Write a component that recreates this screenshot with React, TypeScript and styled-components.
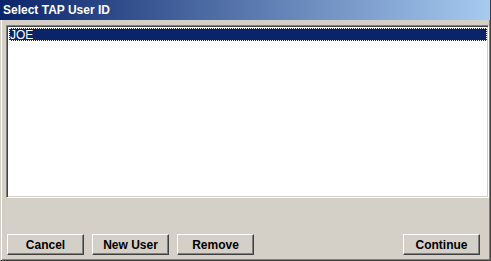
import React from 'react';
import styled, { createGlobalStyle } from 'styled-components';

const GlobalStyle = createGlobalStyle`
  html, body {
    margin: 0;
    padding: 0;
    background: #d4d0c8;
  }
  * {
    box-sizing: border-box;
  }
`;

const Window = styled.div`
  width: 491px;
  height: 261px;
  display: flex;
  flex-direction: column;
  background: #d4d0c8;
  border-left: 1px solid #d4d0c8;
  border-right: 1px solid #404040;
  border-bottom: 1px solid #404040;
  box-shadow: inset 1px 0 0 #ffffff, inset -1px 0 0 #808080, inset 0 -1px 0 #808080;
  font-family: "Liberation Sans", Arial, sans-serif;
`;

const TitleBar = styled.div`
  height: 20px;
  flex: none;
  display: flex;
  align-items: center;
  padding-left: 3px;
  margin-left: -1px;
  background: linear-gradient(to right, #0a246a, #a6caf0);
  color: #ffffff;
  font-size: 12px;
  font-weight: bold;
`;

const Body = styled.div`
  flex: 1;
  display: flex;
  flex-direction: column;
  padding: 5px 1px 5px 5px;
`;

const ListBox = styled.div`
  height: 173px;
  flex: none;
  background: #ffffff;
  border-top: 1px solid #808080;
  border-left: 1px solid #808080;
  border-right: 1px solid #ffffff;
  border-bottom: 1px solid #ffffff;
  box-shadow: inset 1px 1px 0 #404040, inset -1px -1px 0 #d4d0c8;
  padding: 2px 1px 2px 2px;
`;

const ListItem = styled.div<{ selected?: boolean }>`
  height: 13px;
  display: flex;
  align-items: center;
  padding-left: 1px;
  font-size: 12px;
  color: ${p => (p.selected ? '#ffffff' : '#000000')};
  background: ${p => (p.selected ? '#0a246a' : 'transparent')};
  outline: ${p => (p.selected ? '1px dotted #ffffff' : 'none')};
  outline-offset: -1px;
`;

const ButtonRow = styled.div`
  margin-top: auto;
  display: flex;
  gap: 8px;
  padding-left: 1px;
  padding-right: 9px;
`;

const Button = styled.button<{ push?: boolean }>`
  width: 77px;
  height: 21px;
  padding: 0;
  margin: 0;
  margin-left: ${p => (p.push ? 'auto' : '0')};
  background: #d4d0c8;
  border: none;
  border-top: 1px solid #ffffff;
  border-left: 1px solid #ffffff;
  border-right: 1px solid #404040;
  border-bottom: 1px solid #404040;
  box-shadow: inset -1px -1px 0 #808080;
  font-family: "Liberation Sans", Arial, sans-serif;
  font-size: 12px;
  font-weight: bold;
  color: #000000;
`;

export default function App() {
  return (
    <>
      <GlobalStyle />
      <Window>
        <TitleBar>Select TAP User ID</TitleBar>
        <Body>
          <ListBox>
            <ListItem selected>JOE</ListItem>
          </ListBox>
          <ButtonRow>
            <Button>Cancel</Button>
            <Button>New User</Button>
            <Button>Remove</Button>
            <Button push>Continue</Button>
          </ButtonRow>
        </Body>
      </Window>
    </>
  );
}
